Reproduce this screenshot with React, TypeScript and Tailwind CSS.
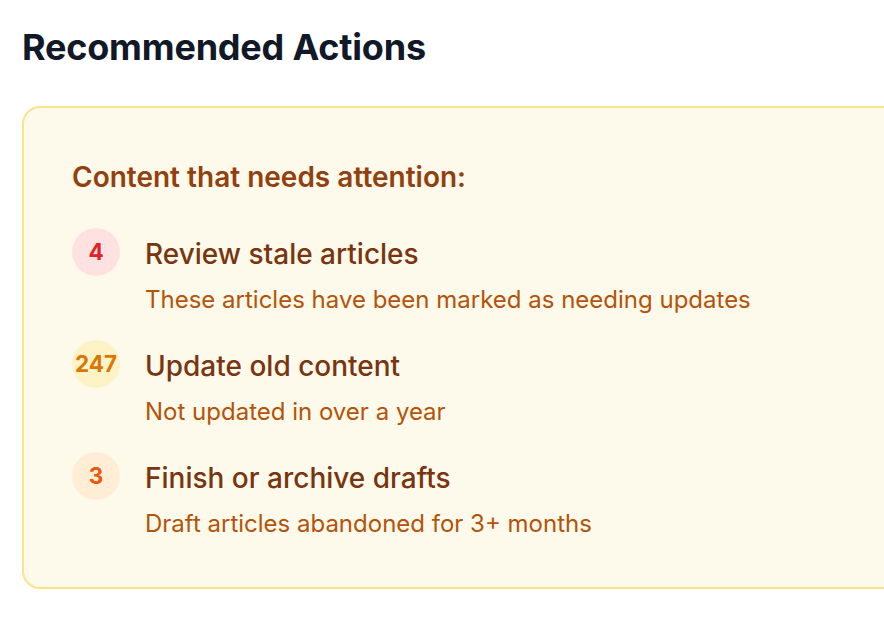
const actions = [
  {
    count: '4',
    title: 'Review stale articles',
    desc: 'These articles have been marked as needing updates',
    badge: 'bg-[#fee2e2] text-[#dc2626]',
  },
  {
    count: '247',
    title: 'Update old content',
    desc: 'Not updated in over a year',
    badge: 'bg-[#fef3c7] text-[#d97706]',
  },
  {
    count: '3',
    title: 'Finish or archive drafts',
    desc: 'Draft articles abandoned for 3+ months',
    badge: 'bg-[#ffedd5] text-[#ea580c]',
  },
];

export default function App() {
  return (
    <div
      className="w-[884px] h-[626px] overflow-hidden bg-white px-[22px] pt-[23px]"
      style={{ fontFamily: 'Inter, "Noto Sans", sans-serif' }}
    >
      <h2 className="text-[36px] leading-[48px] font-bold text-[#111827] tracking-[-0.2px]">
        Recommended Actions
      </h2>

      <div className="mt-[35px] w-[900px] rounded-[18px] border-2 border-[#fae48a] bg-[#fefaeb] px-[48px] pt-[48px] pb-[45px]">
        <h3 className="text-[28px] leading-[42px] font-semibold text-[#92400e]">
          Content that needs attention:
        </h3>

        <div className="mt-[30px] flex flex-col gap-[22px]">
          {actions.map((a) => (
            <div key={a.title} className="flex items-start gap-[25px]">
              {/* count badge */}
              <div
                className={`w-[48px] h-[48px] shrink-0 rounded-full flex items-center justify-center text-[22.5px] font-bold ${a.badge}`}
              >
                {a.count}
              </div>
              <div className="pt-[5px]">
                <div className="text-[28px] leading-[42px] font-medium text-[#78350f]">
                  {a.title}
                </div>
                <div className="mt-[7px] text-[24px] leading-[36px] text-[#b45309]">
                  {a.desc}
                </div>
              </div>
            </div>
          ))}
        </div>
      </div>
    </div>
  );
}
